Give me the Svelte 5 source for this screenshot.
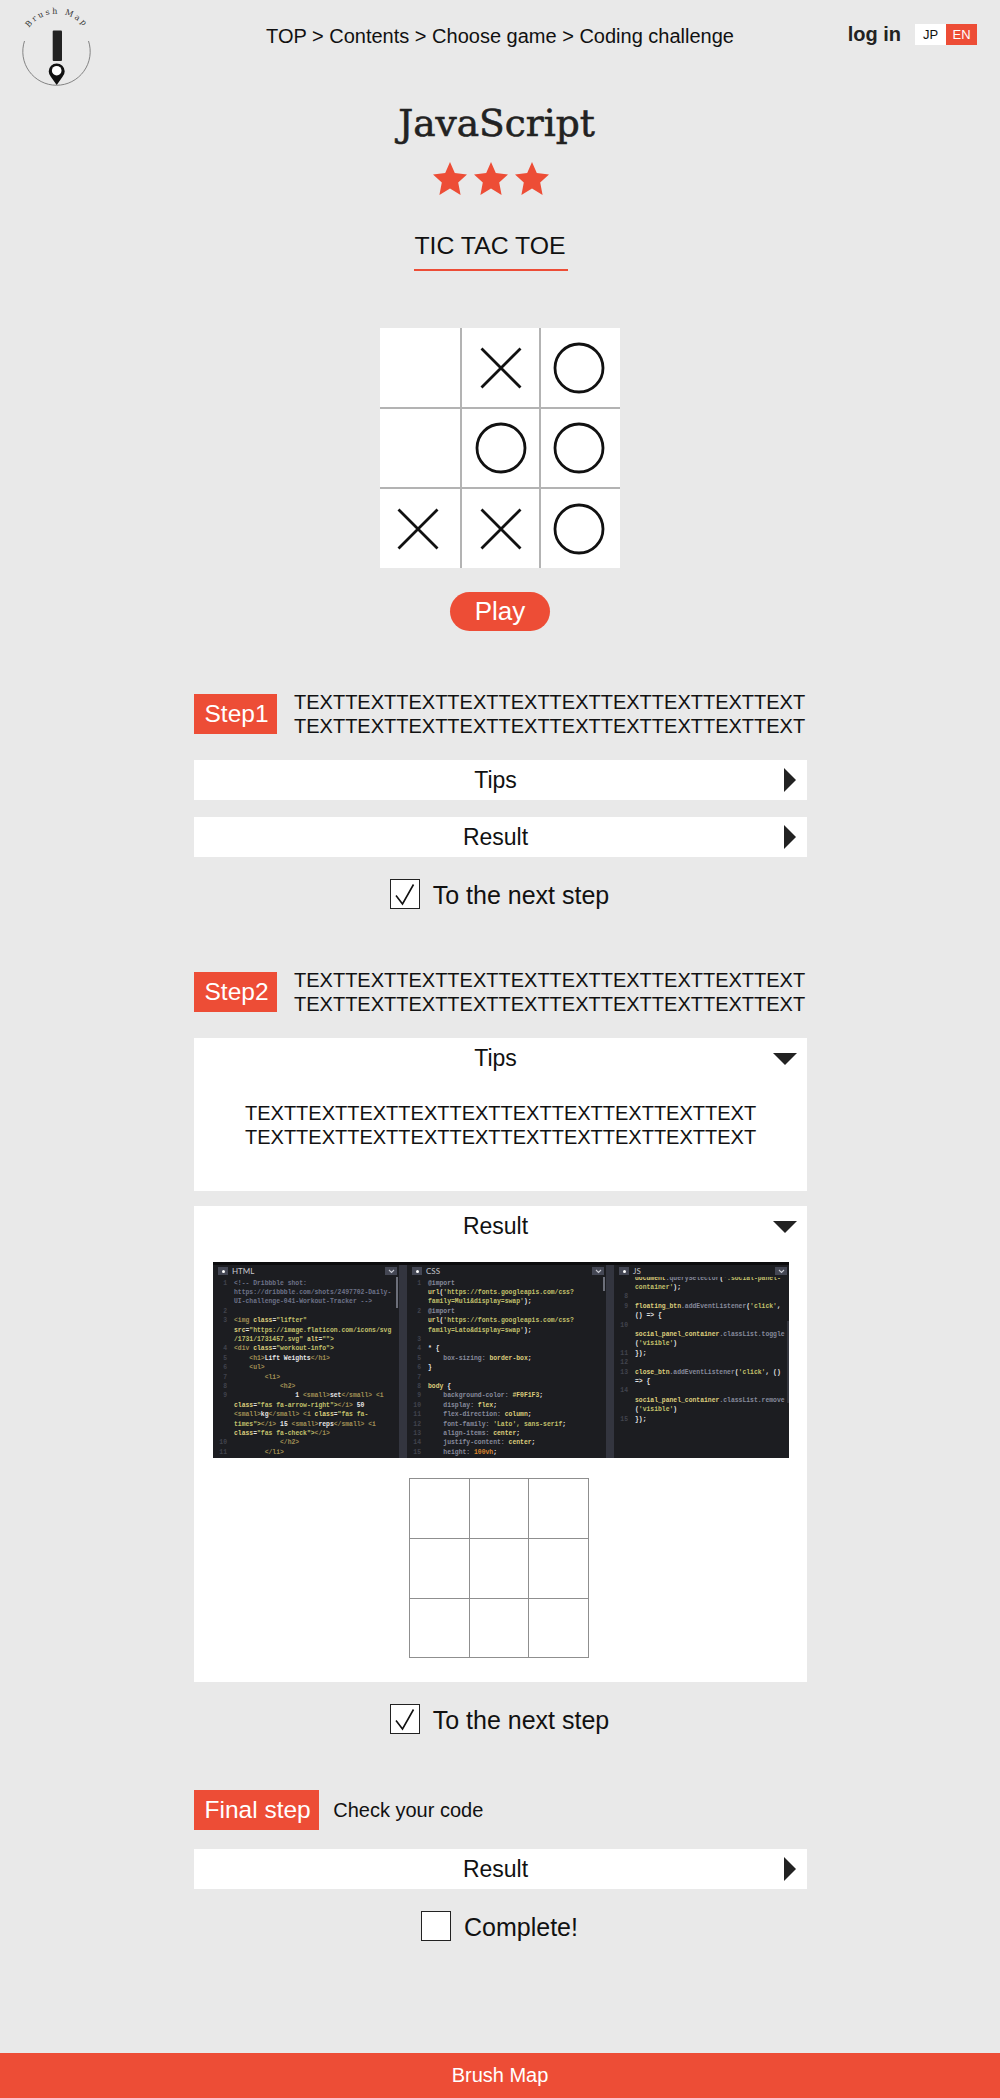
<script>
  // board marks, row by row
  const board = ['', 'x', 'o', '', 'o', 'o', 'x', 'x', 'o'];

  // code rows: [line number, tokens]; tokens are [colour class, text]
  const panels = [
    {
      name: 'HTML',
      offset: 0,
      thumb: 'thumb-html',
      rows: [
        ['1', [['c', '<!-- Dribbble shot:']]],
        ['', [['c', 'https://dribbble.com/shots/2497702-Daily-']]],
        ['', [['c', 'UI-challenge-041-Workout-Tracker -->']]],
        ['2', []],
        ['3', [['t', '<img '], ['a', 'class'], ['w', '='], ['s', '"lifter"']]],
        ['', [['a', 'src'], ['w', '='], ['s', '"https://image.flaticon.com/icons/svg']]],
        ['', [['s', '/1731/1731457.svg" '], ['a', 'alt'], ['w', '='], ['s', '"">']]],
        ['4', [['t', '<div '], ['a', 'class'], ['w', '='], ['s', '"workout-info">']]],
        ['5', [['t', '    <h1>'], ['w', 'Lift Weights'], ['t', '</h1>']]],
        ['6', [['t', '    <ul>']]],
        ['7', [['t', '        <li>']]],
        ['8', [['t', '            <h2>']]],
        ['9', [['w', '                1 '], ['t', '<small>'], ['w', 'set'], ['t', '</small> <i']]],
        ['', [['a', 'class'], ['w', '='], ['s', '"fas fa-arrow-right">'], ['t', '</i> '], ['w', '50']]],
        ['', [['t', '<small>'], ['w', 'kg'], ['t', '</small> <i '], ['a', 'class'], ['w', '='], ['s', '"fas fa-']]],
        ['', [['s', 'times">'], ['t', '</i> '], ['w', '15 '], ['t', '<small>'], ['w', 'reps'], ['t', '</small> <i']]],
        ['', [['a', 'class'], ['w', '='], ['s', '"fas fa-check">'], ['t', '</i>']]],
        ['10', [['t', '            </h2>']]],
        ['11', [['t', '        </li>']]],
      ],
    },
    {
      name: 'CSS',
      offset: 0,
      thumb: 'thumb-css',
      rows: [
        ['1', [['m', '@import']]],
        ['', [['a', 'url'], ['w', '('], ['s', "'https://fonts.googleapis.com/css?"]]],
        ['', [['s', "family=Muli&display=swap'"], ['w', ');']]],
        ['2', [['m', '@import']]],
        ['', [['a', 'url'], ['w', '('], ['s', "'https://fonts.googleapis.com/css?"]]],
        ['', [['s', "family=Lato&display=swap'"], ['w', ');']]],
        ['3', []],
        ['4', [['w', '* {']]],
        ['5', [['m', '    box-sizing: '], ['a', 'border-box'], ['w', ';']]],
        ['6', [['w', '}']]],
        ['7', []],
        ['8', [['a', 'body'], ['w', ' {']]],
        ['9', [['m', '    background-color: '], ['a', '#F0F1F3'], ['w', ';']]],
        ['10', [['m', '    display: '], ['a', 'flex'], ['w', ';']]],
        ['11', [['m', '    flex-direction: '], ['a', 'column'], ['w', ';']]],
        ['12', [['m', '    font-family: '], ['s', "'Lato', sans-serif"], ['w', ';']]],
        ['13', [['m', '    align-items: '], ['a', 'center'], ['w', ';']]],
        ['14', [['m', '    justify-content: '], ['a', 'center'], ['w', ';']]],
        ['15', [['m', '    height: '], ['o', '100vh'], ['w', ';']]],
      ],
    },
    {
      name: 'JS',
      offset: -5,
      thumb: 'thumb-js',
      rows: [
        ['', [['a', 'document'], ['m', '.querySelector'], ['w', '('], ['s', "'.social-panel-"]]],
        ['', [['s', "container'"], ['w', ');']]],
        ['8', []],
        ['9', [['a', 'floating_btn'], ['m', '.addEventListener'], ['w', '('], ['s', "'click'"], ['w', ',']]],
        ['', [['w', '() => {']]],
        ['10', []],
        ['', [['a', 'social_panel_container'], ['m', '.classList.toggle']]],
        ['', [['w', '('], ['s', "'visible'"], ['w', ')']]],
        ['11', [['w', '});']]],
        ['12', []],
        ['13', [['a', 'close_btn'], ['m', '.addEventListener'], ['w', '('], ['s', "'click'"], ['w', ', ()']]],
        ['', [['w', '=> {']]],
        ['14', []],
        ['', [['a', 'social_panel_container'], ['m', '.classList.remove']]],
        ['', [['w', '('], ['s', "'visible'"], ['w', ')']]],
        ['15', [['w', '});']]],
      ],
    },
  ];

  const filler = 'TEXT'.repeat(10);
</script>

{#snippet lines()}
  <span class="fill">{filler}</span>
  <span class="fill">{filler}</span>
{/snippet}

{#snippet check(on, label)}
  <div class="check">
    <span class="box">
      {#if on}
        <svg width="28" height="28" viewBox="0 0 28 28">
          <path d="M5 15.5 L11.5 24 L22.5 4.5" fill="none" stroke="#111" stroke-width="1.6" />
        </svg>
      {/if}
    </span>
    <span class="check-label">{label}</span>
  </div>
{/snippet}

{#snippet head(label, open)}
  <div class="acc-head">
    <span>{label}</span>
    {#if open}
      <i class="arrow-down"></i>
    {:else}
      <i class="arrow-right"></i>
    {/if}
  </div>
{/snippet}

<header class="top">
  <svg class="logo" width="80" height="92" viewBox="0 0 80 92">
    <defs>
      <path id="logo-arc" d="M 3.5 39 A 34.5 34.5 0 0 1 70 39" />
    </defs>
    <path d="M 4.5 41 A 33.7 33.7 0 1 0 68.5 41" fill="none" stroke="#777" stroke-width="0.9" />
    <text class="logo-text">
      <textPath href="#logo-arc" startOffset="50%" text-anchor="middle">Brush Map</textPath>
    </text>
    <rect x="32.7" y="30.5" width="9.3" height="30.5" rx="1" fill="#222" />
    <path d="M36.7 85 L31 77 A 8 8 0 1 1 42.4 77 Z" fill="#111" />
    <circle cx="36.7" cy="70.7" r="4.8" fill="#fff" />
  </svg>
  <nav class="crumbs">TOP &gt; Contents &gt; Choose game &gt; Coding challenge</nav>
  <div class="account">
    <span class="login">log in</span>
    <div class="langs">
      <span class="jp">JP</span>
      <span class="en">EN</span>
    </div>
  </div>
</header>

<section class="hero">
  <h1>JavaScript</h1>
  <div class="stars">
    {#each [0, 1, 2] as s (s)}
      <svg width="34" height="33" viewBox="0 0 34 33">
        <polygon points="17,0 21.8,11 34,12.4 25.2,20.4 27.6,33 17,26.4 6.4,33 8.8,20.4 0,12.4 12.2,11" fill="#ed4d36" />
      </svg>
    {/each}
  </div>
  <h2 class="game">TIC TAC TOE</h2>

  <div class="board">
    {#each board as mark, i (i)}
      <div class="cell" class:left={i % 3 === 0} class:right={i % 3 === 2} class:top-row={i < 3}>
        {#if mark === 'x'}
          <svg width="42" height="42" viewBox="0 0 42 42">
            <path d="M1.5 1.5 L40.5 40.5 M40.5 1.5 L1.5 40.5" stroke="#111" stroke-width="2.8" />
          </svg>
        {:else if mark === 'o'}
          <svg width="52" height="52" viewBox="0 0 52 52">
            <circle cx="26" cy="26" r="24" fill="none" stroke="#111" stroke-width="2.8" />
          </svg>
        {/if}
      </div>
    {/each}
  </div>
  <button class="play">Play</button>
</section>

<main class="steps">
  <section class="step first">
    <div class="step-head">
      <span class="badge">Step1</span>
      <div class="copy">{@render lines()}</div>
    </div>
    <div class="acc">{@render head('Tips', false)}</div>
    <div class="acc gap-s">{@render head('Result', false)}</div>
    {@render check(true, 'To the next step')}
  </section>

  <section class="step second">
    <div class="step-head">
      <span class="badge">Step2</span>
      <div class="copy">{@render lines()}</div>
    </div>
    <div class="acc">
      {@render head('Tips', true)}
      <div class="tips-body">{@render lines()}</div>
    </div>
    <div class="acc gap-m">
      {@render head('Result', true)}
      <div class="editor">
        {#each panels as panel (panel.name)}
          <div class="pane">
            <div class="pane-head">
              <span class="gear"><i></i></span>
              <span class="pane-name">{panel.name}</span>
              <span class="chev">
                <svg width="7" height="5" viewBox="0 0 7 5"><path d="M1 1 L3.5 3.5 L6 1" fill="none" stroke="#c9cbd3" stroke-width="1.1" /></svg>
              </span>
            </div>
            <div class="code" style="margin-top: {panel.offset}px">
              {#each panel.rows as [num, tokens], r (r)}
                <div class="row">
                  <span class="num">{num}</span>
                  <span class="src">{#each tokens as [cls, text], k (k)}<span class={cls}>{text}</span>{/each}</span>
                </div>
              {/each}
            </div>
            <i class={panel.thumb}></i>
          </div>
        {/each}
      </div>
      <div class="answer">
        {#each Array(9) as _, i (i)}
          <div class="slot"></div>
        {/each}
      </div>
    </div>
    {@render check(true, 'To the next step')}
  </section>

  <section class="step final">
    <div class="step-head">
      <span class="badge">Final step</span>
      <p class="note">Check your code</p>
    </div>
    <div class="acc">{@render head('Result', false)}</div>
    {@render check(false, 'Complete!')}
  </section>
</main>

<footer class="foot">Brush Map</footer>

<style>
  :global(body) {
    background: #e9e9e9;
    font-family: "Liberation Sans", Arial, sans-serif;
    color: #111;
  }

  .top {
    display: grid;
    grid-template-columns: 1fr auto 1fr;
    height: 92px;
  }
  .logo {
    margin-left: 20px;
  }
  .logo-text {
    font-family: "DejaVu Serif", serif;
    font-size: 8px;
    letter-spacing: 2.2px;
    fill: #333;
  }
  .crumbs {
    font-size: 20px;
    line-height: 24px;
    padding-top: 24px;
  }
  .account {
    display: flex;
    justify-content: flex-end;
    align-items: flex-start;
    gap: 14px;
    padding: 24px 23px 0 0;
  }
  .login {
    font-size: 20px;
    font-weight: 700;
    line-height: 20px;
    color: #222;
  }
  .langs {
    display: flex;
    font-size: 13px;
    line-height: 21px;
    text-align: center;
  }
  .langs span {
    width: 31px;
  }
  .jp {
    background: #fff;
  }
  .en {
    background: #ed4d36;
    color: #fff;
  }

  .hero {
    display: flex;
    flex-direction: column;
    align-items: center;
  }
  h1 {
    margin: 0 7px 0 0;
    font-family: "DejaVu Serif", serif;
    font-size: 37.5px;
    font-weight: 400;
    line-height: 62px;
    color: #222;
    -webkit-text-stroke: 0.6px #222;
  }
  .stars {
    display: flex;
    gap: 7px;
    margin: 8px 18px 0 0;
  }
  .game {
    margin: 36px 18px 0 0;
    padding: 0 2px 8px 0;
    font-size: 24.8px;
    font-weight: 400;
    line-height: 30px;
    border-bottom: 2px solid #ed4d36;
  }
  .board {
    display: grid;
    grid-template-columns: 80px 79px 81px;
    grid-template-rows: 79px 80px 81px;
    margin-top: 57px;
    background: #fff;
  }
  .cell {
    display: flex;
    align-items: center;
    justify-content: center;
    border-left: 2px solid #b3b3b3;
    border-top: 2px solid #b3b3b3;
  }
  .cell.left {
    border-left: 0;
    padding-right: 5px;
  }
  .cell.right {
    padding-right: 3px;
  }
  .cell.top-row {
    border-top: 0;
  }
  .play {
    width: 100px;
    height: 39px;
    margin-top: 24px;
    padding: 0;
    border: 0;
    border-radius: 20px;
    background: #ed4d36;
    color: #fff;
    font: 26px/39px "Liberation Sans", Arial, sans-serif;
  }

  .steps {
    margin: 0 193px 0 194px;
  }
  .first {
    margin-top: 63px;
  }
  .second {
    margin-top: 63px;
  }
  .final {
    margin-top: 56px;
  }
  .step-head {
    display: flex;
    align-items: center;
    gap: 17px;
    height: 40px;
    margin-bottom: 26px;
  }
  .badge {
    padding: 0 8.5px 0 10.5px;
    background: #ed4d36;
    color: #fff;
    font-size: 24.5px;
    line-height: 40px;
    white-space: nowrap;
  }
  .copy,
  .tips-body {
    display: flex;
    flex-direction: column;
    font-size: 20px;
    line-height: 24px;
  }
  .note {
    margin: 0 0 0 -3px;
    font-size: 20px;
  }
  .final .step-head {
    margin-bottom: 19px;
  }

  .acc {
    background: #fff;
  }
  .gap-s {
    margin-top: 17px;
  }
  .gap-m {
    margin-top: 15px;
  }
  .acc-head {
    position: relative;
    height: 40px;
    padding-right: 10px;
    font-size: 23px;
    line-height: 41px;
    text-align: center;
  }
  .arrow-right {
    position: absolute;
    top: 8px;
    right: 11px;
    border-left: 12px solid #222;
    border-top: 12px solid transparent;
    border-bottom: 12px solid transparent;
  }
  .arrow-down {
    position: absolute;
    top: 15px;
    right: 10px;
    border-top: 12px solid #222;
    border-left: 12px solid transparent;
    border-right: 12px solid transparent;
  }
  .tips-body {
    padding: 23px 51px 42px;
  }

  .check {
    display: flex;
    align-items: center;
    justify-content: center;
    gap: 13px;
    height: 30px;
    margin-top: 22px;
    padding-right: 2px;
    font-size: 25px;
    line-height: 30px;
  }
  .check-label {
    padding-top: 1px;
  }
  .box {
    box-sizing: border-box;
    width: 30px;
    height: 30px;
    border: 1px solid #222;
    background: #fff;
  }
  .box svg {
    display: block;
  }

  .editor {
    display: grid;
    grid-template-columns: 186px 199px 175px;
    gap: 8px;
    width: 576px;
    height: 196px;
    margin: 16px 0 0 19px;
    border-top: 3px solid #0c0c0e;
    background: #33353f;
    box-sizing: border-box;
    overflow: hidden;
  }
  .pane {
    position: relative;
    background: #1c1d21;
    overflow: hidden;
  }
  .pane-head {
    position: relative;
    z-index: 1;
    display: flex;
    align-items: center;
    height: 12px;
    padding: 0 2px 0 5px;
    background: #1c1d21;
  }
  .gear {
    display: flex;
    align-items: center;
    justify-content: center;
    width: 10px;
    height: 8px;
    background: #444754;
  }
  .gear i {
    width: 3px;
    height: 3px;
    border-radius: 50%;
    background: #fff;
  }
  .pane-name {
    margin-left: 4px;
    font-family: Lato, sans-serif;
    font-size: 8px;
    color: #c4c6cd;
  }
  .chev {
    display: flex;
    align-items: center;
    justify-content: center;
    width: 12px;
    height: 8px;
    margin-left: auto;
    background: #444754;
  }
  .code {
    padding-top: 1.7px;
    font-family: "Liberation Mono", monospace;
    font-size: 6.4px;
    font-weight: 700;
    line-height: 9.4px;
    white-space: pre;
  }
  .row {
    display: flex;
    height: 9.4px;
  }
  .num {
    flex: 0 0 13px;
    padding-right: 3px;
    text-align: right;
    color: #41434d;
    box-sizing: border-box;
    margin-left: 4px;
  }
  .src {
    margin-left: 4px;
  }
  .c { color: #6d7288; }
  .t { color: #a08f55; }
  .a { color: #dccd7c; }
  .s { color: #c2c06c; }
  .w { color: #e6e6e6; }
  .m { color: #868a9c; }
  .o { color: #d9852f; }

  .thumb-html,
  .thumb-css,
  .thumb-js {
    position: absolute;
    right: 1px;
    width: 2px;
    background: #6c6f7a;
  }
  .thumb-html {
    top: 12px;
    height: 31px;
  }
  .thumb-css {
    top: 12px;
    height: 14px;
  }
  .thumb-js {
    top: 56px;
    height: 82px;
    right: 0;
    background: #35373f;
  }

  .answer {
    display: grid;
    grid-template-columns: 60px 59px 61px;
    grid-template-rows: 60px 60px 60px;
    width: 181px;
    margin: 20px 0 0 215px;
    padding-bottom: 24px;
  }
  .slot {
    border-left: 1px solid #8f8f8f;
    border-top: 1px solid #8f8f8f;
  }
  .slot:nth-child(3n) {
    border-right: 1px solid #8f8f8f;
  }
  .slot:nth-child(n + 7) {
    border-bottom: 1px solid #8f8f8f;
  }
  .foot {
    margin-top: 112px;
    height: 45px;
    background: #ed4d36;
    color: #fff;
    font-size: 20px;
    line-height: 45px;
    text-align: center;
  }
</style>
